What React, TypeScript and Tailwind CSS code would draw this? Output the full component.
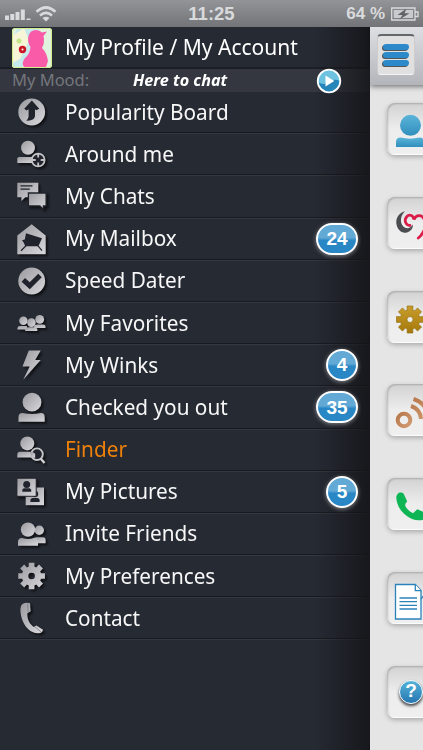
import React from "react";

interface MenuItem {
  label: string;
  icon: React.ReactNode;
  badge?: string;
  active?: boolean;
}

const DARK = "#20232b";

const gearPath = (cx: number, cy: number, outer: number, inner: number) => {
  const points: string[] = [];
  for (let i = 0; i < 8; i++) {
    const a = (i * Math.PI) / 4;
    [
      [-0.29, inner],
      [-0.21, outer],
      [0.21, outer],
      [0.29, inner],
    ].forEach(([d, r]) => {
      points.push(`${(cx + r * Math.cos(a + d)).toFixed(2)} ${(cy + r * Math.sin(a + d)).toFixed(2)}`);
    });
  }
  return `M${points.join("L")}Z`;
};

const items: MenuItem[] = [
  {
    label: "Popularity Board",
    icon: (
      <>
        <circle cx="15.7" cy="16" r="13.4" />
        <path fill={DARK} d="M15.8 4.5L23.3 12.7 20.2 14.2 19 13.2V19.6C19 22.8 16 25 10.2 24.6 12 23.4 12.6 21.6 12.6 19.6V13.2L10.6 14.4 8.2 12.7Z" />
      </>
    ),
  },
  {
    label: "Around me",
    icon: (
      <>
        <circle cx="12" cy="9.8" r="7" />
        <path d="M1.3 20.5Q1.5 19 3 19H16L19 25H1.3Z" />
        <circle cx="22.2" cy="22" r="6.4" fill={DARK} stroke="#c2c2c6" strokeWidth="1.8" />
        <path fill="none" stroke="#c2c2c6" strokeWidth="1.8" d="M22.2 16V19.5M22.2 24.5V28M16 22H19.7M24.7 22H28.4" />
      </>
    ),
  },
  {
    label: "My Chats",
    icon: (
      <>
        <path d="M1.3 2.7H22.3V17.3H9.3L5.4 21V17.3H1.3Z" />
        <path fill="none" stroke={DARK} strokeWidth="1.3" d="M4.5 5.8H16.5M4.5 9.2H13.8" />
        <path stroke={DARK} strokeWidth="1.3" d="M12.4 13H30.1V25.9H27.4V29.4L23.8 25.9H12.4Z" />
      </>
    ),
  },
  {
    label: "My Mailbox",
    badge: "24",
    icon: (
      <>
        <path d="M15.7 1.3L29.7 12.5V31.3H1.3V12.5Z" />
        <path fill={DARK} d="M10 10.3L26 15.3 22.4 23.3H9.2L7.8 19.8 6 17.2 8.8 16.5Z" />
        <path fill="none" stroke={DARK} strokeWidth="1.2" d="M10 22.8L5 27.7M22 22.8L26 27.7" />
      </>
    ),
  },
  {
    label: "Speed Dater",
    icon: (
      <>
        <circle cx="15.7" cy="16" r="13.4" />
        <path fill="none" stroke={DARK} strokeWidth="5" d="M7.3 14.8L13.7 20.7 24 10.5" />
      </>
    ),
  },
  {
    label: "My Favorites",
    icon: (
      <>
        <circle cx="7.4" cy="13.7" r="4.2" />
        <circle cx="23.7" cy="12.4" r="4.4" />
        <path d="M1.5 22.5V21Q1.5 19 4 19H11V22.5ZM18 21V19.5Q18.5 17.4 21 17.4H27Q29.5 17.4 29.5 19.5V21Z" />
        <circle cx="15.4" cy="15.6" r="4.3" />
        <path d="M9.2 24V22.2Q9.5 20.3 12 20.3H18.5Q21 20.3 21.3 22.2V24Z" />
      </>
    ),
  },
  {
    label: "My Winks",
    badge: "4",
    icon: <path d="M12.8 1.5H24.7L19.2 11H24.7L7.2 30.8 13.7 17.6H6.5Z" />,
  },
  {
    label: "Checked you out",
    badge: "35",
    icon: (
      <>
        <circle cx="16" cy="11.2" r="9.4" />
        <path d="M2.5 30.8V26Q2.5 22 6.5 22Q16 23.8 25 22Q28.7 22 28.7 26V30.8Z" />
      </>
    ),
  },
  {
    label: "Finder",
    active: true,
    icon: (
      <>
        <circle cx="11.3" cy="9.4" r="7" />
        <path d="M1.3 23.5V21Q1.3 17.8 4 17.8H14L18 23.5Z" />
        <circle cx="21" cy="20.2" r="5.8" fill={DARK} stroke="#c6c6ca" strokeWidth="1.9" />
        <path d="M14.5 18Q19 18 19.2 20.5V23.8H15Z" />
        <path stroke="#d2d2d6" strokeWidth="2.4" d="M24.8 24.7L28.5 29" />
      </>
    ),
  },
  {
    label: "My Pictures",
    badge: "5",
    icon: (
      <>
        <path d="M9.7 11.5H28V29.2H9.7Z" />
        <circle cx="19" cy="18" r="3.2" fill={DARK} />
        <path fill={DARK} d="M14.4 26V23.5L16 22H22L23.6 23.5V26Z" />
        <path stroke={DARK} strokeWidth="1" d="M.9 2.2H20.2V20.3H.9Z" />
        <circle cx="10.7" cy="8.5" r="3.5" fill={DARK} />
        <path fill={DARK} d="M6.3 15.7V13.5L7.8 12.2H13.6L15.2 13.5V15.7Z" />
      </>
    ),
  },
  {
    label: "Invite Friends",
    icon: (
      <>
        <circle cx="23.3" cy="12.3" r="4.7" />
        <path d="M16 25.3V22Q17 19.3 20 19.3H27Q29.6 19.3 29.6 22V25.3Z" />
        <circle cx="12" cy="11.6" r="7.2" />
        <path d="M2 27.8V24Q2 20 6 20Q12 21.8 18 20Q22 20 22 24V27.8Z" />
      </>
    ),
  },
  {
    label: "My Preferences",
    icon: <path fillRule="evenodd" d={gearPath(15.6, 16, 13.6, 9.8) + "M12.3 16a3.3 3.3 0 1 0 6.6 0a3.3 3.3 0 1 0-6.6 0Z"} />,
  },
  {
    label: "Contact",
    icon: (
      <>
        <path d="M6.5 1.9Q10 .2 14 1.2L14.7 9.2 11.4 11.2C11 16.5 13 21.5 17.8 25L20.4 23.4 27 27.7Q26.5 31 22.5 31.3C14 31.5 8.5 24.5 5.8 16.5 4 10.5 3.7 4 6.5 1.9Z" />
        <path fill="none" stroke="#777980" strokeWidth=".8" d="M11.6 1.5L12.2 10.3M18.8 24.7L25 29.8" />
      </>
    ),
  },
];

const tiles: React.ReactNode[] = [
  <g fill="url(#sky)">
    <circle cx="23.5" cy="22.3" r="10.5" />
    <path d="M9 44V39Q9 34.5 13.5 34.5Q23 36.8 32.5 34.5Q37 34.5 37 39V44Z" />
  </g>,
  <g fill="none" strokeLinecap="round">
    <path fill="#4b4c50" d="M18 14.3C12 16 9 20.5 9.3 26 10 33 15 36.8 20 35.4 24 34.2 26 31.5 26 27.5 23.5 31.5 19.5 32.3 16.3 29.5 12.5 25.5 13.5 18.5 18 14.3Z" />
    <path stroke="#db1c48" strokeWidth="2.8" d="M23 28.5C18.5 28.5 17 23 19.5 20 22.5 16.5 26.5 18.5 27 22.5 29 17.5 35 17.5 37 22M37 33.5C35.5 36 35 38 31.3 41" />
  </g>,
  <path fill="url(#gold)" fillRule="evenodd" stroke="#94700f" strokeWidth=".7" d={gearPath(23, 28.5, 13.8, 9.8) + "M20 28.5a3 3 0 1 0 6 0a3 3 0 1 0-6 0Z"} />,
  <g fill="none" stroke="url(#copper)" strokeWidth="4">
    <circle cx="17" cy="36" r="6.3" />
    <path d="M24 22Q33.5 25 34 35M26.5 15Q40 19 42 35" />
  </g>,
  <path fill="#0db554" d="M9.3 20C9.3 15 14 13 16.8 16L20.2 23.5Q17.2 26 18.6 28.5 21 33 26 35.3L30.3 31.3 38 34.5Q41 38 36 41.7 31 43.2 25 41 10.5 34 9.3 20Z" />,
  <g fill="#fff" stroke="#2b83ba" strokeWidth="1.3">
    <path d="M8.5 12.5H28.3L34 18.5V47H8.5Z" />
    <path d="M28.3 12.5V18.7H34M12.5 26H30M12.5 29.7H30M12.5 33.3H30M12.5 37H30M34 27L38 22" />
  </g>,
  null,
];

const Defs = () => (
  <svg className="absolute h-0 w-0">
    <defs>
      <linearGradient id="silver" x1="0" y1="0" x2="1" y2="1">
        <stop offset="0" stopColor="#9a9a9e" />
        <stop offset="1" stopColor="#d9d9dd" />
      </linearGradient>
      <linearGradient id="sky" x1="0" y1="0" x2="0" y2="1">
        <stop offset="0" stopColor="#5bb4d9" />
        <stop offset="1" stopColor="#318fbd" />
      </linearGradient>
      <linearGradient id="gold" x1="0" y1="0" x2="0" y2="1">
        <stop offset="0" stopColor="#c99d2c" />
        <stop offset="1" stopColor="#a5780b" />
      </linearGradient>
      <linearGradient id="copper" x1="0" y1="0" x2="1" y2="1">
        <stop offset="0" stopColor="#b6774a" />
        <stop offset="1" stopColor="#d29b70" />
      </linearGradient>
    </defs>
  </svg>
);

const StatusBar = () => (
  <div className="relative flex h-[27px] shrink-0 items-center justify-between bg-linear-to-b from-[#939498] to-[#737478] pr-[4px] pl-[5px] text-[#d9dadc]">
    <svg width="54" height="20" viewBox="0 0 54 20" fill="#d9dadc">
      <path d="M0 11.5H4V16H0ZM5.3 10H9.3V16H5.3ZM10.5 8H14.5V16H10.5ZM15.8 5.5H19.8V16H15.8ZM21.5 14.5H25.5V16H21.5Z" />
      <path fill="none" stroke="#d9dadc" strokeWidth="2.7" d="M31.5 7.8Q41 -.8 50.5 7.8M35 11.6Q41 6.3 47 11.6" />
      <path d="M37.5 14Q41 11.3 44.5 14L41 17.5Z" />
    </svg>
    <div className="absolute inset-x-0 text-center font-['Liberation_Sans'] text-[18.5px] font-bold">11:25</div>
    <div className="flex items-center gap-[6px]">
      <span className="font-['Liberation_Sans'] text-[17px] font-bold">64 %</span>
      <svg width="28" height="14" viewBox="0 0 28 14" fill="none" stroke="#d9dadc" strokeWidth="1.3">
        <path d="M.7 1H24V13H.7ZM24.5 5H27V9.5H24.5" />
        <path fill="#c9cacc" stroke="none" d="M2.7 3H22V11H2.7Z" />
        <path fill="#626367" stroke="none" d="M15.5 1.5L6.5 8H11.5L8.5 12.5 18.5 6.3H13.5Z" />
      </svg>
    </div>
  </div>
);

const Badge = ({ value }: { value: string }) => (
  <div
    className={`relative z-10 flex h-[32px] items-center justify-center rounded-[16px] border-[2.5px] border-white bg-linear-to-b from-[#62a9d6] from-45% to-[#2a87c5] to-55% pt-[1px] font-['Liberation_Sans'] text-[19px] font-bold text-white shadow-[0_1px_4px_rgba(255,255,255,0.45)] ${
      value.length > 1 ? "w-[42px]" : "w-[32px]"
    }`}
  >
    {value}
  </div>
);

const MenuRow = ({ item }: { item: MenuItem }) => (
  <div className="flex h-[42.2px] shrink-0 items-center border-t border-b border-t-[#353840] border-b-[#171a20] pr-[12px] pl-[16px]">
    <svg width="32" height="32" viewBox="0 0 32 32" fill="url(#silver)" className="drop-shadow-[2px_2px_1px_rgba(0,0,0,0.6)]">
      {item.icon}
    </svg>
    <span
      className={`ml-[17px] flex-1 origin-left scale-x-[0.943] pb-[3px] text-[22px] leading-[30px] whitespace-nowrap ${
        item.active ? "text-[#ef8109]" : "text-[#f7f7f8]"
      }`}
    >
      {item.label}
    </span>
    {item.badge && <Badge value={item.badge} />}
  </div>
);

const App: React.FC = () => {
  return (
    <div className="flex h-[750px] w-[423px] flex-col overflow-hidden bg-[#262a33] font-['Noto_Sans',sans-serif]">
      <Defs />
      <StatusBar />
      <div className="flex min-h-0 flex-1">
        {/* Side menu */}
        <div className="relative flex w-[370px] shrink-0 flex-col">
          <div className="flex h-[42px] shrink-0 items-center border-b-2 border-[#1b1e24] pl-[12px]">
            <svg width="40" height="40" viewBox="0 0 40 40" className="mt-[1px] rounded-[3px]">
              <rect width="40" height="40" fill="#dff3df" />
              <path fill="#c5e9ec" d="M5 0H28L10 40H0V16Z" />
              <path fill="#f6f5d8" d="M12 0L17 13 8 31 0 35V8Z" />
              <circle cx="7" cy="13" r="2.5" fill="#c7e58b" />
              <path fill="#f95ba9" d="M16.5 8Q18 2 24 2Q28 2 30 4.5L35 3.5 31.5 8Q33 15 30 20Q35 25 36 33L34 39H12Q9 35 13 30Q18 26 18.5 19Q15 14 16.5 8Z" />
              <circle cx="10.5" cy="21.5" r="3.7" fill="#cc1426" />
              <circle cx="10.5" cy="21.5" r="1" fill="#fff" />
              <rect x=".5" y=".5" width="39" height="39" rx="3" fill="none" stroke="#d5ec8e" strokeWidth="1.2" />
            </svg>
            <span className="ml-[13px] origin-left scale-x-[0.956] pb-[2px] text-[22px] whitespace-nowrap text-white">My Profile / My Account</span>
          </div>
          <div className="flex h-[22px] shrink-0 items-center bg-[#343740]">
            <span className="ml-[12px] w-[121px] origin-left text-[16.5px] leading-[22px] whitespace-nowrap text-[#74767c]">My Mood:</span>
            <span className="origin-left scale-x-[0.98] text-[16.5px] leading-[22px] font-bold whitespace-nowrap text-white italic">Here to chat</span>
          </div>
          <svg width="26" height="26" viewBox="0 0 26 26" className="absolute top-[41px] left-[316px] z-20">
            <circle cx="13" cy="13" r="11.3" fill="#6cc2df" />
            <path fill="#2685b9" d="M2 14Q8 18 13 14T24 13A11 11 0 0 1 2 14Z" />
            <circle cx="13" cy="13" r="11.3" fill="none" stroke="#fff" strokeWidth="1.8" />
            <path fill="#fff" d="M9.5 7.5L18.3 13 9.5 18.5Z" />
          </svg>
          {items.map((item) => (
            <MenuRow key={item.label} item={item} />
          ))}
          <div className="flex-1 border-t border-[#353840]" />
          <div className="pointer-events-none absolute inset-y-0 right-0 w-[56px] bg-linear-to-r from-transparent to-[#121316]/80" />
        </div>

        {/* Page behind the menu */}
        <div className="flex flex-1 flex-col bg-[#e5e5e5]">
          <div className="h-[58px] shrink-0 bg-linear-to-b from-[#dedfe2] via-[#c9cacf] to-[#b4b5ba] pt-[7px] pl-[7px] shadow-[0_1px_6px_rgba(0,0,0,0.6)]">
            <div className="flex h-[41px] w-[38px] flex-col items-center justify-center gap-[1.5px] rounded-[4px] border border-t-2 border-t-[#66676b] border-r-[#ccc] border-b-[#f3f3f3] border-l-[#ccc] bg-[#e0e0e1]">
              {[0, 1, 2].map((bar) => (
                <div key={bar} className="h-[6.5px] w-[26px] rounded-full bg-[#2c8acb] shadow-[-1px_1px_0_#555]" />
              ))}
            </div>
          </div>
          <div className="flex flex-col gap-[41.75px] pt-[18px] pl-[17px]">
            {tiles.map((tile, index) => (
              <div
                key={index}
                className="h-[52px] w-[60px] shrink-0 rounded-[8px] bg-linear-to-b from-[#d2d2d2] via-[#ededed] to-[#f0efef] shadow-[0_2px_5px_rgba(0,0,0,0.25),inset_1px_1px_2px_rgba(0,0,0,0.2),inset_0_-1px_1px_#fff]"
              >
                {tile ? (
                  <svg width="60" height="52" viewBox="0 0 60 52">
                    {tile}
                  </svg>
                ) : (
                  <div className="pt-[14px] pl-[12px]">
                    <div className="flex h-[24px] w-[24px] items-center justify-center rounded-full border-[1.5px] border-white bg-[#3491c4] bg-linear-to-b from-[#56b4d8] to-[#2576b1] font-['Liberation_Sans'] text-[19px] font-bold text-white shadow-[0_2px_3px_rgba(0,0,0,0.7)]">
                      ?
                    </div>
                  </div>
                )}
              </div>
            ))}
          </div>
        </div>
      </div>
    </div>
  );
};

export default App;
